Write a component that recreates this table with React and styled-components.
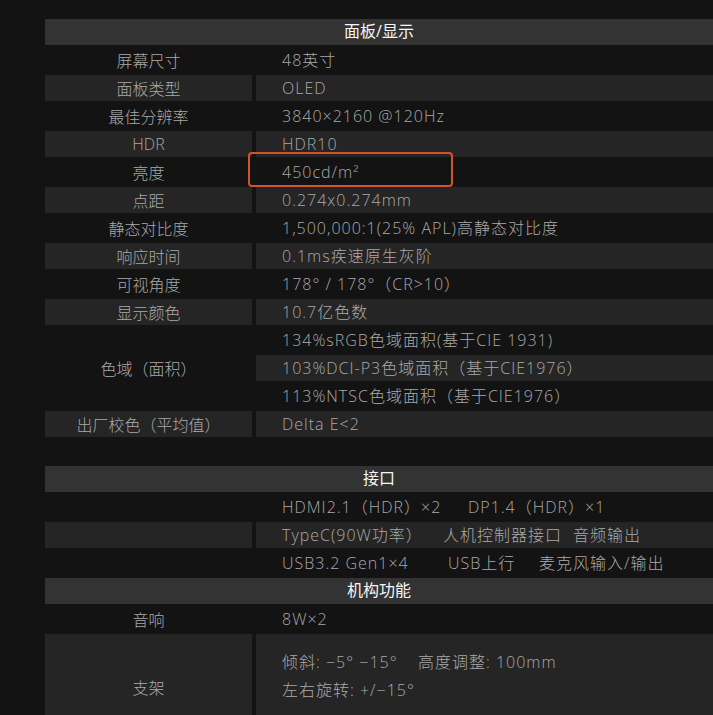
import React from "react";
import styled, { createGlobalStyle } from "styled-components";

const GlobalStyle = createGlobalStyle`
  html, body {
    margin: 0;
    padding: 0;
    background: #131313;
  }
  body {
    font-family: "Open Sans", "Noto Sans CJK SC", sans-serif;
    overflow: hidden;
  }
`;

const Page = styled.div`
  padding: 19px 0 0 45px;
  width: 713px;
  height: 715px;
  box-sizing: border-box;
  overflow: hidden;
`;

const Table = styled.div`
  display: flex;
  flex-direction: column;
  gap: 2px;
  width: 668px;
`;

const SectionHead = styled.div`
  height: 26px;
  background: #333333;
  color: #f6f6f6;
  font-size: 16px;
  font-weight: 400;
  line-height: 24px;
  text-align: center;
`;

const Row = styled.div`
  display: grid;
  grid-template-columns: 207px 1fr;
  grid-template-rows: ${(p) => (p.$rows ? `repeat(${p.$rows}, 26px)` : p.$height || "26px")};
  column-gap: 4px;
  row-gap: 2px;
`;

const Label = styled.div`
  grid-row: ${(p) => (p.$span ? `1 / span ${p.$span}` : "auto")};
  display: flex;
  align-items: center;
  justify-content: center;
  background: ${(p) => (p.$shaded ? "#252525" : "transparent")};
  color: #a9a9a9;
  font-size: 16px;
  font-weight: 300;
`;

const Value = styled.div`
  position: relative;
  display: flex;
  flex-direction: ${(p) => (p.$stack ? "column" : "row")};
  align-items: ${(p) => (p.$stack ? "flex-start" : "center")};
  padding: ${(p) => (p.$stack ? "14px 0 0 26px" : "0 0 0 26px")};
  background: ${(p) => (p.$shaded ? "#252525" : "transparent")};
  color: #a9a9a9;
  font-size: 16px;
  font-weight: 300;
  letter-spacing: 1px;
  line-height: ${(p) => (p.$stack ? "28px" : "26px")};
  white-space: nowrap;
`;

const Item = styled.span`
  display: inline-block;
  width: ${(p) => (p.$w ? `${p.$w}px` : "auto")};
`;

const Line = styled.div`
  display: flex;
`;

const Highlight = styled.div`
  position: absolute;
  left: -8px;
  top: -7px;
  width: 205px;
  height: 35px;
  box-sizing: border-box;
  border: 2px solid #d3532b;
  border-radius: 4px;
  pointer-events: none;
`;

const Spacer = styled.div`
  height: 25px;
`;

const panel = [
  ["屏幕尺寸", "48英寸"],
  ["面板类型", "OLED"],
  ["最佳分辨率", "3840×2160 @120Hz"],
  ["HDR", "HDR10"],
  ["亮度", "450cd/m²", true],
  ["点距", "0.274x0.274mm"],
  ["静态对比度", "1,500,000:1(25% APL)高静态对比度"],
  ["响应时间", "0.1ms疾速原生灰阶"],
  ["可视角度", "178° / 178°（CR>10）"],
  ["显示颜色", "10.7亿色数"],
];

const gamut = [
  "134%sRGB色域面积(基于CIE 1931)",
  "103%DCI-P3色域面积（基于CIE1976）",
  "113%NTSC色域面积（基于CIE1976）",
];

// [text, column width]
const ports = [
  [["HDMI2.1（HDR）×2", 186], ["DP1.4（HDR）×1"]],
  [["TypeC(90W功率）", 161], ["人机控制器接口", 130], ["音频输出"]],
  [["USB3.2 Gen1×4", 166], ["USB上行", 91], ["麦克风输入/输出"]],
];

const App = () => {
  return (
    <Page>
      <GlobalStyle />
      <Table>
        <SectionHead>面板/显示</SectionHead>
        {panel.map(([label, value, marked], i) => (
          <Row key={label}>
            <Label $shaded={i % 2 === 1}>{label}</Label>
            <Value $shaded={i % 2 === 1}>
              {value}
              {marked && <Highlight />}
            </Value>
          </Row>
        ))}
        <Row $rows={3}>
          <Label $span={3}>色域（面积）</Label>
          {gamut.map((g, i) => (
            <Value key={g} $shaded={i === 1}>
              {g}
            </Value>
          ))}
        </Row>
        <Row>
          <Label $shaded>出厂校色（平均值）</Label>
          <Value $shaded>Delta E&lt;2</Value>
        </Row>
        <Spacer />

        <SectionHead>接口</SectionHead>
        {ports.map((items, i) => (
          <Row key={i}>
            <Label $shaded={i === 1} />
            <Value $shaded={i === 1}>
              {items.map(([t, w]) => (
                <Item key={t} $w={w}>
                  {t}
                </Item>
              ))}
            </Value>
          </Row>
        ))}

        <SectionHead>机构功能</SectionHead>
        <Row>
          <Label>音响</Label>
          <Value>8W×2</Value>
        </Row>
        <Row $height="106px">
          <Label $shaded>支架</Label>
          <Value $shaded $stack>
            <Line>
              <Item $w={136}>倾斜: −5°  −15°</Item>
              <Item>高度调整: 100mm</Item>
            </Line>
            <Line>
              <Item>左右旋转: +/−15°</Item>
            </Line>
          </Value>
        </Row>
      </Table>
    </Page>
  );
};

export default App;
